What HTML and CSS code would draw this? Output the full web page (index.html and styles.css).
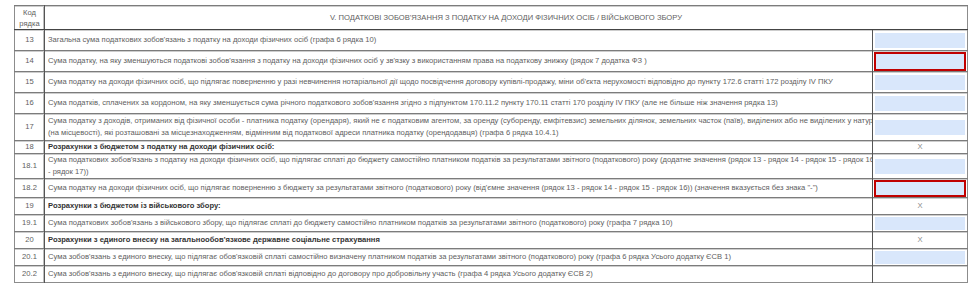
FILE: index.html
```html
<!DOCTYPE html>
<html lang="uk">
<head>
<meta charset="utf-8">
<title>Розділ V</title>
<link rel="stylesheet" href="styles.css">
</head>
<body>
<table class="form">
  <colgroup>
    <col class="c-code">
    <col class="c-desc">
    <col class="c-val">
  </colgroup>
  <tr class="head">
    <td class="code">Код<br>рядка</td>
    <td class="title" colspan="2">V. ПОДАТКОВІ ЗОБОВ'ЯЗАННЯ З ПОДАТКУ НА ДОХОДИ ФІЗИЧНИХ ОСІБ / ВІЙСЬКОВОГО ЗБОРУ</td>
  </tr>
  <tr class="r21">
    <td class="code">13</td>
    <td class="desc"><span class="t">Загальна сума податкових зобов'язань з податку на доходи фізичних осіб (графа 6 рядка 10)</span></td>
    <td class="val"><div class="inp"></div></td>
  </tr>
  <tr class="r21">
    <td class="code">14</td>
    <td class="desc"><span class="t">Сума податку, на яку зменшуються податкові зобов'язання з податку на доходи фізичних осіб у зв'язку з використанням права на податкову знижку (рядок 7 додатка ФЗ )</span></td>
    <td class="val"><div class="inp err"></div></td>
  </tr>
  <tr class="r21">
    <td class="code">15</td>
    <td class="desc"><span class="t">Сума податку на доходи фізичних осіб, що підлягає поверненню у разі невчинення нотаріальної дії щодо посвідчення договору купівлі-продажу, міни об'єкта нерухомості відповідно до пункту 172.6 статті 172 розділу IV ПКУ</span></td>
    <td class="val"><div class="inp"></div></td>
  </tr>
  <tr class="r21">
    <td class="code">16</td>
    <td class="desc"><span class="t">Сума податків, сплачених за кордоном, на яку зменшується сума річного податкового зобов'язання згідно з підпунктом 170.11.2 пункту 170.11 статті 170 розділу IV ПКУ (але не більше ніж значення рядка 13)</span></td>
    <td class="val"><div class="inp"></div></td>
  </tr>
  <tr class="r27">
    <td class="code">17</td>
    <td class="desc"><span class="t">Сума податку з доходів, отриманих від фізичної особи - платника податку (орендаря), який не є податковим агентом, за оренду (суборенду, емфітевзис) земельних ділянок, земельних часток (паїв), виділених або не виділених у натурі (на місцевості), які розташовані за місцезнаходженням, відмінним від податкової адреси платника податку (орендодавця) (графа 6 рядка 10.4.1)</span></td>
    <td class="val"><div class="inp"></div></td>
  </tr>
  <tr class="r12">
    <td class="code">18</td>
    <td class="desc sec"><span class="t">Розрахунки з бюджетом з податку на доходи фізичних осіб:</span></td>
    <td class="val x">X</td>
  </tr>
  <tr class="r25">
    <td class="code">18.1</td>
    <td class="desc"><span class="t narrow">Сума податкових зобов'язань з податку на доходи фізичних осіб, що підлягає сплаті до бюджету самостійно платником податків за результатами звітного (податкового) року (додатне значення (рядок 13 - рядок 14 - рядок 15 - рядок 16 - рядок 17))</span></td>
    <td class="val"><div class="inp"></div></td>
  </tr>
  <tr class="r18">
    <td class="code">18.2</td>
    <td class="desc"><span class="t">Сума податку на доходи фізичних осіб, що підлягає поверненню з бюджету за результатами звітного (податкового) року (від'ємне значення (рядок 13 - рядок 14 - рядок 15 - рядок 16)) (значення вказується без знака "-")</span></td>
    <td class="val"><div class="inp err small"></div></td>
  </tr>
  <tr class="r17">
    <td class="code">19</td>
    <td class="desc sec"><span class="t">Розрахунки з бюджетом із військового збору:</span></td>
    <td class="val x">X</td>
  </tr>
  <tr class="r17">
    <td class="code">19.1</td>
    <td class="desc"><span class="t">Сума податкових зобов'язань з військового збору, що підлягає сплаті до бюджету самостійно платником податків за результатами звітного (податкового) року (графа 7 рядка 10)</span></td>
    <td class="val"><div class="inp low"></div></td>
  </tr>
  <tr class="r17">
    <td class="code">20</td>
    <td class="desc sec"><span class="t">Розрахунки з единого внеску на загальнообов'язкове державне соціальне страхування</span></td>
    <td class="val x">X</td>
  </tr>
  <tr class="r17">
    <td class="code">20.1</td>
    <td class="desc"><span class="t">Сума зобов'язань з единого внеску, що підлягає обов'язковій сплаті самостійно визначену платником податків за результатами звітного (податкового) року (графа 6 рядка Усього додатку ЄСВ 1)</span></td>
    <td class="val"><div class="inp low"></div></td>
  </tr>
  <tr class="r17">
    <td class="code">20.2</td>
    <td class="desc"><span class="t">Сума зобов'язань з единого внеску, що підлягає обов'язковій сплаті відповідно до договору про добровільну участь (графа 4 рядка Усього додатку ЄСВ 2)</span></td>
    <td class="val"></td>
  </tr>
</table>
</body>
</html>
```

FILE: styles.css
```css
html, body {
  margin: 0;
  padding: 0;
  background: #ffffff;
}
body {
  padding: 5px 0 0 14px;
  font-family: "Liberation Sans", Arial, sans-serif;
  font-size: 7.6px;
  color: #5e5e5e;
}
.form {
  width: 954px;
  table-layout: fixed;
  border-collapse: collapse;
  border: 1px solid #8c8c8c;
}
.c-code { width: 30px; }
.c-val { width: 95px; }
.form td {
  border-top: 1px solid #7c7c7c;
  padding: 0;
  vertical-align: middle;
  line-height: 12px;
  box-shadow: inset 0 1px 0 #cdcdcd;
}
.form td.code {
  text-align: center;
  border-right: 1px solid #555555;
  box-shadow: inset 0 1px 0 #cdcdcd, inset -1px 0 0 #bdbdbd;
}
.form td.val {
  border-left: 1px solid #555555;
  text-align: center;
  padding: 0 1px;
}
.head td {
  height: 23px;
  line-height: 11px;
  border-bottom: 1px solid #444444;
}
.head td.title {
  text-align: center;
}
.form td.desc {
  padding: 0 0 0 3px;
  text-align: left;
  overflow: hidden;
}
.t {
  display: block;
  margin-right: -4px;
}
.t.narrow {
  margin-right: -2px;
}
.sec {
  font-weight: bold;
  color: #333333;
}
.x {
  color: #8a8a8a;
}
.r21 td { height: 20px; }
.r27 td { height: 26px; }
.r12 td { height: 11px; }
.r25 td { height: 24px; }
.r18 td { height: 17px; }
.r17 td { height: 16px; }
.inp {
  box-sizing: border-box;
  height: 15px;
  margin: 1px 1px 0;
  background: #d9e7fb;
}
.inp.low {
  height: 13px;
}
.inp.err {
  height: 19px;
  margin: 1px 0 0;
  border: 2px solid #c00000;
}
.inp.err.small {
  height: 17px;
}
```
